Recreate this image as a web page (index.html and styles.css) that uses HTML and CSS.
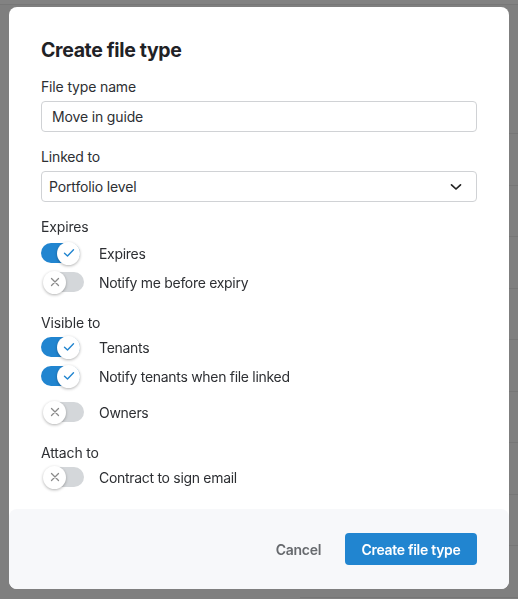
FILE: index.html
```html
<!DOCTYPE html>
<html lang="en">
<head>
<meta charset="utf-8">
<title>Create file type</title>
<link rel="stylesheet" href="styles.css">
</head>
<body>
<div class="page">
  <div class="page-top"></div>
  <div class="page-spacer"></div>
  <div class="page-row"></div>
  <div class="page-row"></div>
  <div class="page-row"></div>
  <div class="page-row"></div>
  <div class="page-row"></div>
  <div class="page-row"></div>
  <div class="page-row"></div>
  <div class="page-row"></div>
  <div class="page-row"></div>
</div>

<div class="overlay">
  <div class="modal">
    <div class="modal-body">
      <h1 class="title">Create file type</h1>

      <label class="field-label">File type name</label>
      <div class="input">Move in guide</div>

      <label class="field-label gap-top">Linked to</label>
      <div class="select">
        <span>Portfolio level</span>
        <svg class="chevron" width="12" height="8" viewBox="0 0 12 8"><path d="M1.5 1.8 L6 6 L10.5 1.8" fill="none" stroke="#222" stroke-width="1.7" stroke-linecap="round" stroke-linejoin="round"/></svg>
      </div>

      <div class="field-label gap-top">Expires</div>
      <div class="toggles">
        <div class="toggle-row">
          <span class="switch on"><span class="track"></span><span class="knob"><svg width="12" height="10" viewBox="0 0 12 10"><path d="M1.5 5.2 L4.5 8 L10.5 1.8" fill="none" stroke="#2185d0" stroke-width="1.4" stroke-linecap="round" stroke-linejoin="round"/></svg></span></span>
          <span class="toggle-text">Expires</span>
        </div>
        <div class="toggle-row">
          <span class="switch off"><span class="track"></span><span class="knob"><svg width="10" height="10" viewBox="0 0 10 10"><path d="M1.5 1.5 L8.5 8.5 M8.5 1.5 L1.5 8.5" fill="none" stroke="#8a8a8a" stroke-width="1.3" stroke-linecap="round"/></svg></span></span>
          <span class="toggle-text">Notify me before expiry</span>
        </div>
      </div>

      <div class="field-label section-gap">Visible to</div>
      <div class="toggles">
        <div class="toggle-row">
          <span class="switch on"><span class="track"></span><span class="knob"><svg width="12" height="10" viewBox="0 0 12 10"><path d="M1.5 5.2 L4.5 8 L10.5 1.8" fill="none" stroke="#2185d0" stroke-width="1.4" stroke-linecap="round" stroke-linejoin="round"/></svg></span></span>
          <span class="toggle-text">Tenants</span>
        </div>
        <div class="toggle-row sub">
          <span class="switch on"><span class="track"></span><span class="knob"><svg width="12" height="10" viewBox="0 0 12 10"><path d="M1.5 5.2 L4.5 8 L10.5 1.8" fill="none" stroke="#2185d0" stroke-width="1.4" stroke-linecap="round" stroke-linejoin="round"/></svg></span></span>
          <span class="toggle-text">Notify tenants when file linked</span>
        </div>
        <div class="toggle-row">
          <span class="switch off"><span class="track"></span><span class="knob"><svg width="10" height="10" viewBox="0 0 10 10"><path d="M1.5 1.5 L8.5 8.5 M8.5 1.5 L1.5 8.5" fill="none" stroke="#8a8a8a" stroke-width="1.3" stroke-linecap="round"/></svg></span></span>
          <span class="toggle-text">Owners</span>
        </div>
      </div>

      <div class="field-label section-gap">Attach to</div>
      <div class="toggles">
        <div class="toggle-row">
          <span class="switch off"><span class="track"></span><span class="knob"><svg width="10" height="10" viewBox="0 0 10 10"><path d="M1.5 1.5 L8.5 8.5 M8.5 1.5 L1.5 8.5" fill="none" stroke="#8a8a8a" stroke-width="1.3" stroke-linecap="round"/></svg></span></span>
          <span class="toggle-text">Contract to sign email</span>
        </div>
      </div>
    </div>

    <div class="modal-footer">
      <button class="btn-cancel">Cancel</button>
      <button class="btn-primary">Create file type</button>
    </div>
  </div>
</div>
</body>
</html>
```

FILE: styles.css
```css
* { box-sizing: border-box; }

html, body {
  margin: 0;
  padding: 0;
}

body {
  background: #7f7f7f;
  font-family: Inter, "Liberation Sans", sans-serif;
  width: 518px;
  height: 599px;
  overflow: hidden;
}

.page {
  display: flex;
  flex-direction: column;
}

.page-top {
  height: 5px;
  border-bottom: 1px solid #777;
  background: #828282;
}

.page-spacer {
  height: 129px;
  margin-left: 300px;
  border-bottom: 1px solid #767676;
}

.page-row {
  height: 51.5px;
  margin-left: 300px;
  border-bottom: 1px solid #767676;
}

.overlay {
  position: fixed;
  inset: 0;
  display: flex;
  justify-content: center;
  align-items: flex-start;
  padding-top: 7px;
}

.modal {
  width: 500px;
  height: 582px;
  background: #fff;
  border-radius: 8px;
  display: flex;
  flex-direction: column;
}

.modal-body {
  flex: 1;
  padding: 31px 32px 0 32px;
  display: flex;
  flex-direction: column;
}

.title {
  margin: 0 0 15px 0;
  font-size: 19.5px;
  line-height: 24px;
  font-weight: 700;
  color: #1f2226;
  letter-spacing: -0.35px;
}

.field-label {
  display: block;
  font-size: 14px;
  line-height: 20px;
  color: #2d2f33;
  margin-bottom: 4px;
  letter-spacing: -0.15px;
}

.gap-top { margin-top: 15px; }

.section-gap { margin-top: 19px; margin-bottom: 2px; }

.input,
.select {
  height: 31px;
  border: 1px solid #d0d2d5;
  border-radius: 4px;
  font-size: 14px;
  color: #2d2f33;
  letter-spacing: -0.15px;
  display: flex;
  align-items: center;
}

.input { padding: 0 10px; }

.select {
  padding: 0 14px 0 7px;
  justify-content: space-between;
}

.chevron { display: block; }

.toggles {
  display: flex;
  flex-direction: column;
  gap: 5px;
}

.toggle-row {
  display: flex;
  align-items: center;
  height: 24px;
}

.toggle-row.sub { margin-bottom: 7px; }

.toggle-text {
  margin-left: 15px;
  font-size: 14px;
  color: #2d2f33;
  letter-spacing: -0.3px;
}

.switch {
  position: relative;
  width: 43px;
  height: 24px;
  flex: none;
}

.switch .track {
  position: absolute;
  top: 2px;
  height: 20px;
  border-radius: 10px;
}

.switch.on .track { left: 0; right: 4px; background: #2185d0; }
.switch.off .track { left: 3px; right: 0; background: #d4d7da; }

.switch .knob {
  position: absolute;
  top: 0.5px;
  width: 23px;
  height: 23px;
  border-radius: 50%;
  background: #fff;
  box-shadow: 0 1px 3px rgba(0, 0, 0, 0.3);
  display: flex;
  align-items: center;
  justify-content: center;
}

.switch.on .knob { left: 16px; }
.switch.off .knob { left: 2px; }

.switch svg { display: block; }

.modal-footer {
  height: 80px;
  background: #f7f8fa;
  border-radius: 8px;
  display: flex;
  align-items: center;
  justify-content: flex-end;
  gap: 24px;
  padding: 0 32px;
}

.btn-cancel {
  border: none;
  background: none;
  padding: 0;
  font-family: inherit;
  font-size: 14px;
  font-weight: 600;
  color: #676a6e;
  letter-spacing: -0.3px;
}

.btn-primary {
  height: 32px;
  width: 132px;
  border: none;
  border-radius: 4px;
  background: #2185d0;
  color: #fff;
  font-family: inherit;
  font-size: 14px;
  font-weight: 600;
  letter-spacing: -0.3px;
}
```
